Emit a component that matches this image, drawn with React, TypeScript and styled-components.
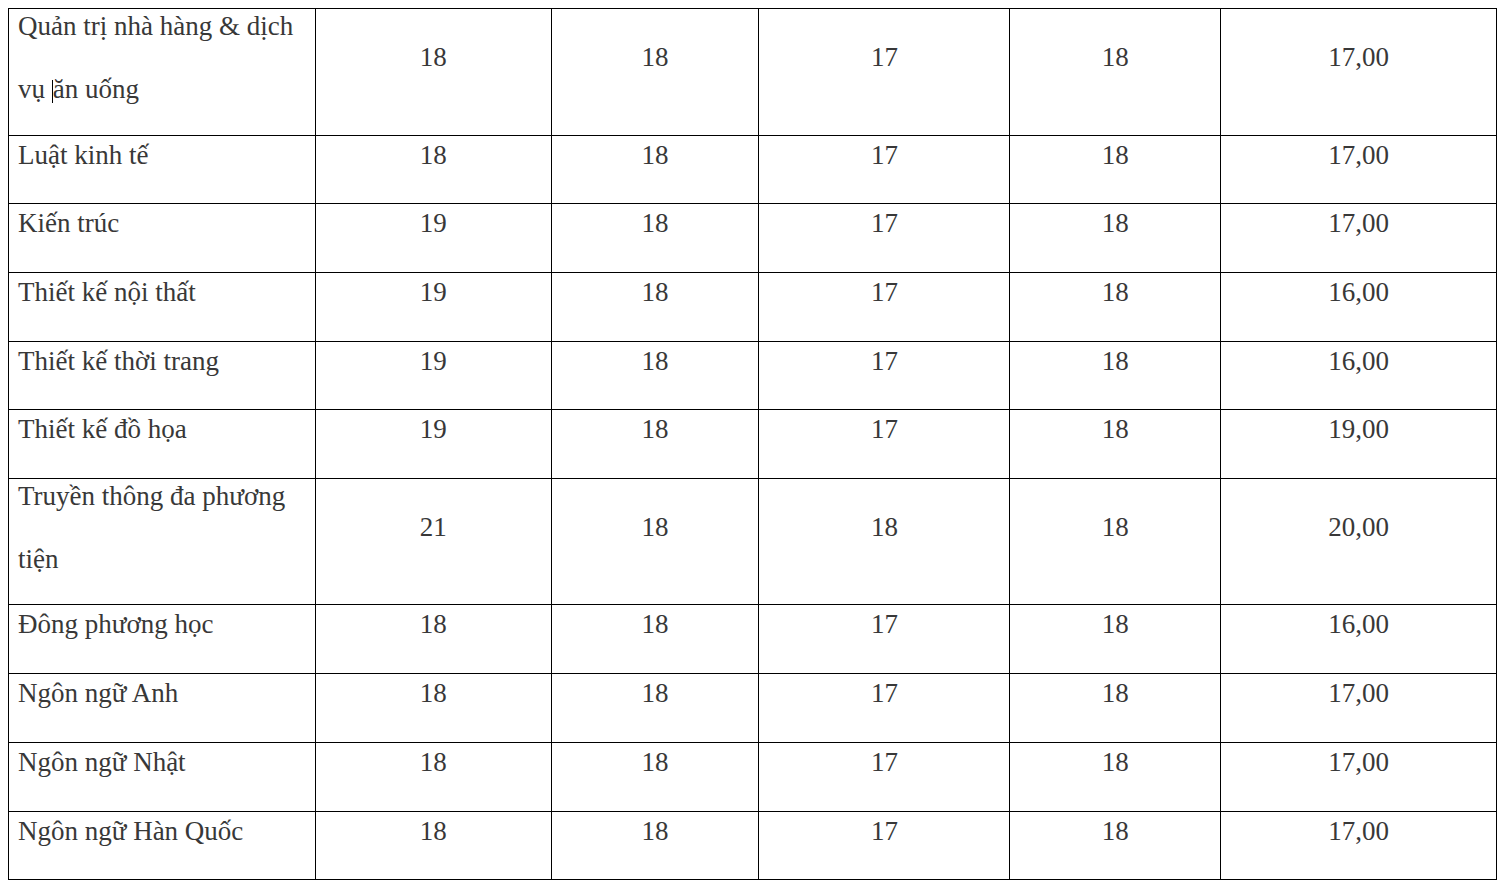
import React from 'react';
import styled, { createGlobalStyle } from 'styled-components';

const GlobalStyle = createGlobalStyle`
  html, body {
    overflow: hidden;
  }
  body {
    margin: 8px 3px 0 8px;
    background: #fff;
    font-family: 'Liberation Serif', 'Times New Roman', serif;
  }
`;

type Row = {
  name: React.ReactNode;
  values: string[];
  tall?: boolean;
};

const rows: Row[] = [
  {
    name: (
      <>
        Quản trị nhà hàng &amp; dịch vụ <Caret />ăn uống
      </>
    ),
    values: ['18', '18', '17', '18', '17,00'],
    tall: true,
  },
  { name: 'Luật kinh tế', values: ['18', '18', '17', '18', '17,00'] },
  { name: 'Kiến trúc', values: ['19', '18', '17', '18', '17,00'] },
  { name: 'Thiết kế nội thất', values: ['19', '18', '17', '18', '16,00'] },
  { name: 'Thiết kế thời trang', values: ['19', '18', '17', '18', '16,00'] },
  { name: 'Thiết kế đồ họa', values: ['19', '18', '17', '18', '19,00'] },
  {
    name: 'Truyền thông đa phương tiện',
    values: ['21', '18', '18', '18', '20,00'],
    tall: true,
  },
  { name: 'Đông phương học', values: ['18', '18', '17', '18', '16,00'] },
  { name: 'Ngôn ngữ Anh', values: ['18', '18', '17', '18', '17,00'] },
  { name: 'Ngôn ngữ Nhật', values: ['18', '18', '17', '18', '17,00'] },
  { name: 'Ngôn ngữ Hàn Quốc', values: ['18', '18', '17', '18', '17,00'] },
];

// column widths measured in the reference, total 1489
const colWidths = [307, 236, 208, 251, 211, 276];
const total = colWidths.reduce((a, b) => a + b, 0);

const App = () => (
  <>
    <GlobalStyle />
    <ScoreTable>
      <colgroup>
        {colWidths.map((w, i) => (
          <col key={i} style={{ width: `${(w / total) * 100}%` }} />
        ))}
      </colgroup>
      <tbody>
        {rows.map((row, i) => (
          <TableRow key={i} $tall={row.tall}>
            <NameCell>
              <NameText $tall={row.tall}>{row.name}</NameText>
            </NameCell>
            {row.values.map((v, j) => (
              <ValueCell key={j}>
                <ValueText $tall={row.tall}>{v}</ValueText>
              </ValueCell>
            ))}
          </TableRow>
        ))}
      </tbody>
    </ScoreTable>
  </>
);

export default App;

const ScoreTable = styled.table`
  width: 100%;
  table-layout: fixed;
  border-collapse: collapse;
  color: #383838;
  font-size: 27px;
`;

const TableRow = styled.tr<{ $tall?: boolean }>`
  height: ${({ $tall }) => ($tall ? '126.5px' : '68.7px')};
`;

const NameCell = styled.td`
  border: 1px solid #000;
  padding: 0 9px;
  vertical-align: top;
  text-align: left;
`;

const NameText = styled.div<{ $tall?: boolean }>`
  line-height: 63px;
  margin-top: ${({ $tall }) => ($tall ? '-14px' : '-12px')};
`;

const ValueCell = styled.td`
  border: 1px solid #000;
  padding: 0 4px;
  vertical-align: top;
  text-align: center;
`;

const ValueText = styled.div<{ $tall?: boolean }>`
  line-height: 63px;
  margin-top: ${({ $tall }) => ($tall ? '17px' : '-12px')};
`;

function Caret() {
  return <CaretBar />;
}

const CaretBar = styled.span`
  display: inline-block;
  width: 1px;
  height: 23px;
  background: #000;
  vertical-align: -5px;
`;
